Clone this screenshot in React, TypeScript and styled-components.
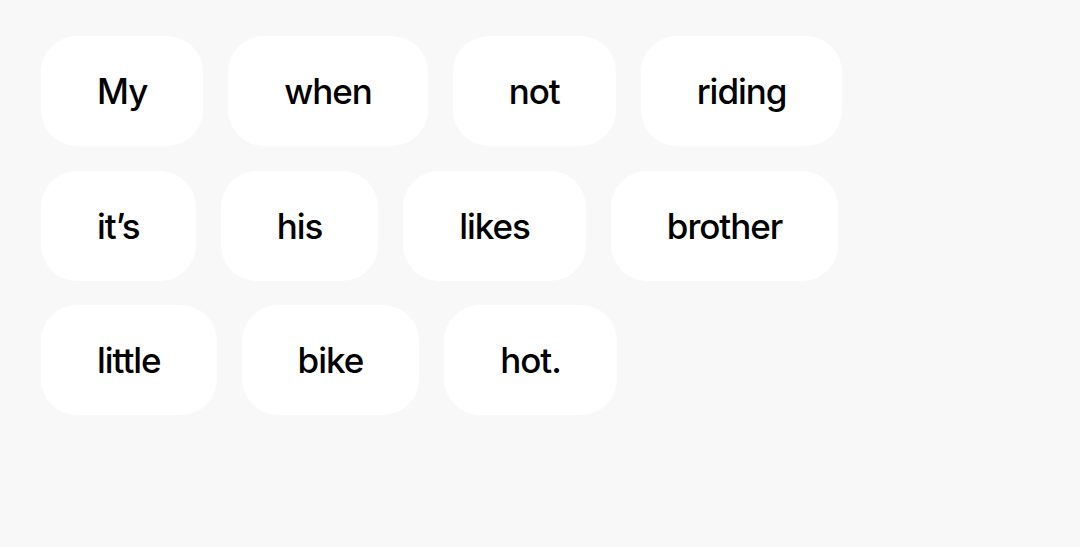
import React from "react";
import styled, { createGlobalStyle } from "styled-components";

const Global = createGlobalStyle`
  html, body { margin: 0; padding: 0; background: #f8f8f8; }
  body { font-family: Inter, "Noto Sans", sans-serif; }
`;

const Page = styled.div`
  width: 1080px;
  height: 547px;
  box-sizing: border-box;
  padding: 36px 0 0 41px;
  background: #f8f8f8;
`;

const Bank = styled.div`
  width: 900px;
  display: flex;
  flex-wrap: wrap;
  column-gap: 25px;
  row-gap: 24.5px;
`;

const Chip = styled.div`
  height: 110px;
  box-sizing: border-box;
  padding: 0 56px;
  display: flex;
  align-items: center;
  justify-content: center;
  background: #ffffff;
  border-radius: 36px;
  font-family: Inter, sans-serif;
  font-size: 35px;
  font-weight: 500;
  letter-spacing: -0.03em;
  color: #000000;
`;

const words = ["My", "when", "not", "riding", "it’s", "his", "likes", "brother", "little", "bike", "hot."];

export default function App() {
  return (
    <>
      <Global />
      <Page>
        <Bank>
          {words.map((w, i) => (
            <Chip key={i}>{w}</Chip>
          ))}
        </Bank>
      </Page>
    </>
  );
}
